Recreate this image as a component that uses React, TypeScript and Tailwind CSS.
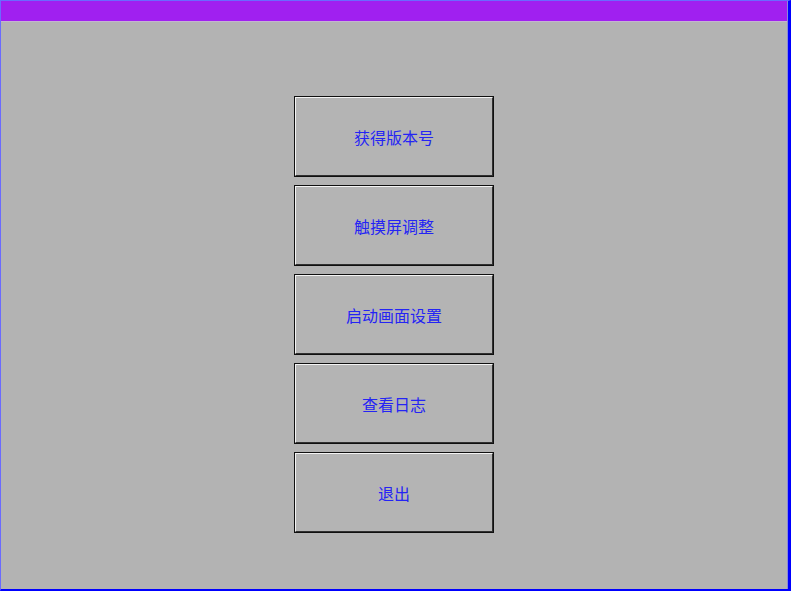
import React from "react";

const items = ["获得版本号", "触摸屏调整", "启动画面设置", "查看日志", "退出"];

function MenuButton({ label }: { label: string }) {
  return (
    <button
      type="button"
      className="w-[200px] h-[81px] border border-[#101010] bg-[#b4b4b4] p-0"
    >
      <div className="w-full h-full flex items-center justify-center pt-px border-t border-l border-t-[#f4f4f4] border-l-[#f4f4f4] border-b border-r border-b-[#303030] border-r-[#303030]">
        <span className="text-[16px] leading-none text-[#2424f4] [font-family:'Noto_Sans_CJK_SC',sans-serif]">
          {label}
        </span>
      </div>
    </button>
  );
}

export default function App() {
  return (
    <div className="w-[791px] h-[591px] flex flex-col bg-[#b3b3b3] border-t border-l border-[#6a6aff] border-r-[3px] border-r-[#0000ff] border-b-[2px] border-b-[#0000ff]">
      <div className="flex-1 flex flex-col border-r border-r-[#8a8ad8]">
        <div className="h-[20px] bg-[#a020f0]" />
        <div className="h-px bg-[#c4b4d0]" />
        <div className="flex flex-col items-center gap-[8px] pt-[74px]">
          {items.map((t) => (
            <MenuButton key={t} label={t} />
          ))}
        </div>
      </div>
    </div>
  );
}
